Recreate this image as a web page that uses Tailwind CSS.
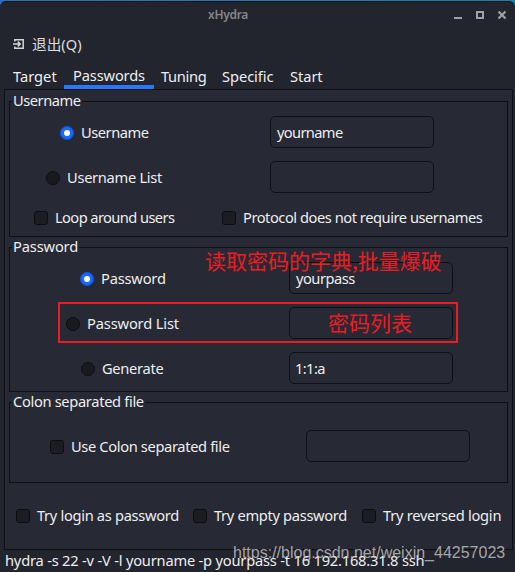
<!DOCTYPE html>
<html lang="zh">
<head>
<meta charset="utf-8">
<title>xHydra</title>
<script src="https://cdn.jsdelivr.net/npm/@tailwindcss/browser@4"></script>
</head>
<body class="w-[515px] h-[572px] overflow-hidden bg-[#0d1015] font-['Noto_Sans','Noto_Sans_CJK_SC',sans-serif] text-[14.67px] leading-[20px] text-[#eeeef0] whitespace-nowrap">
<div class="relative flex h-[572px] w-[515px] flex-col overflow-hidden bg-gradient-to-r from-[#2c70ba] to-[#1d7fa6] pt-px">
 <div class="flex h-[571px] flex-col rounded-t-[6px] border-t border-[#0e1116] bg-[#23252e]">
  <header class="relative flex h-[28px] items-center pl-[208px] text-[12px] font-semibold tracking-[-0.3px] text-[#85868b]">
   <h1 class="pb-[2px]">xHydra</h1>
   <svg class="absolute left-[453px] top-[8px]" width="56" height="12" fill="none" stroke="#a0a1a5" stroke-width="2"><path d="M1 8h8M24 2h6v6h-6z"/><path stroke-width="2.200" d="M45.500 1.500l7 7M52.500 1.500l-7 7"/></svg>
  </header>
  <nav class="flex h-[30px] items-center gap-[7px] pl-[13px]">
   <svg class="-mt-[2px]" width="12" height="12" viewBox="0 0 12 12" fill="none" stroke="#d6d6d8" stroke-width="1.500"><path d="M1.800 3.500V1.700h8.400v8.600H1.800V8.500M0 6h7M4.800 3.600L7.200 6 4.800 8.400"/></svg>
   <span class="pb-[2px] text-[#dcdcdf]">退出(Q)</span>
  </nav>
  <div class="flex h-[29px] items-center pl-[4px]">
   <span class="w-[60px] pl-[9px] pt-[2px]">Target</span>
   <span class="h-[29px] w-[90px] border-b-4 border-[#2777ff] pl-[9px] pt-[5px] tracking-[-0.15px]">Passwords</span>
   <span class="w-[61px] pl-[7px] pt-[2px] tracking-[-0.33px]">Tuning</span>
   <span class="w-[68px] pl-[7px] pt-[2px] tracking-[-0.06px]">Specific</span>
   <span class="pl-[7px] pt-[2px] tracking-[-0.06px]">Start</span>
  </div>
  <main class="ml-[4px] h-[461px] w-[509px] shrink-0 border border-[#0d0f14] bg-[#272a34] px-[4px] pt-[11px]">
   <section class="h-[136px] w-[499px] border border-[#0d0f14]">
    <h2 class="-mt-[9px] ml-[2px] h-[17px] leading-[14px] w-[70px] bg-[#272a34] pl-px tracking-[-0.46px]">Username</h2>
    <div class="mt-[6px] flex h-[32px] items-center pl-[50px]">
     <i class="mt-px mr-[7px] size-[14px] rounded-full border border-[#0d55e6] bg-[#1769ff] p-[3px]"><b class="block size-[6px] rounded-full bg-white"></b></i><span class="w-[189px] pb-px tracking-[-0.46px]">Username</span>
     <span class="flex h-[32px] w-[164px] items-center rounded-[5px] border border-[#0d0f14] pb-px pl-[6px] tracking-[-0.65px]">yourname</span>
    </div>
    <div class="mt-[13px] flex h-[32px] items-center pl-[36px]">
     <i class="mt-px mr-[7px] size-[14px] rounded-full border border-[#0c0d11] bg-[#181a20]"></i><span class="w-[203px] pb-px tracking-[-0.3px]">Username List</span>
     <span class="h-[32px] w-[164px] rounded-[5px] border border-[#0d0f14]"></span>
    </div>
    <div class="mt-[15px] flex h-[20px] items-center pl-[24px]">
     <i class="mr-[7px] size-[14px] rounded-[3px] border border-[#0c0d11] bg-[#1b1d23]"></i><span class="w-[167px] pb-[2px] tracking-[-0.59px]">Loop around users</span>
     <i class="mr-[7px] size-[14px] rounded-[3px] border border-[#0c0d11] bg-[#1b1d23]"></i><span class="pb-[2px] tracking-[-0.46px]">Protocol does not require usernames</span>
    </div>
   </section>
   <section class="mt-[10px] h-[145px] w-[499px] border border-[#0d0f14]">
    <h2 class="-mt-[9px] ml-[2px] h-[17px] leading-[14px] w-[67px] bg-[#272a34] pl-px tracking-[-0.15px]">Password</h2>
    <div class="mt-[6px] flex h-[32px] items-center pl-[70px]">
     <i class="mt-px mr-[7px] size-[14px] rounded-full border border-[#0d55e6] bg-[#1769ff] p-[3px]"><b class="block size-[6px] rounded-full bg-white"></b></i><span class="w-[188px] pb-px tracking-[-0.2px]">Password</span>
     <span class="flex h-[32px] w-[164px] items-center rounded-[5px] border border-[#0d0f14] pb-px pl-[6px] tracking-[-0.5px]">yourpass</span>
    </div>
    <div class="mt-[13px] flex h-[32px] items-center pl-[56px]">
     <i class="mt-px mr-[7px] size-[14px] rounded-full border border-[#0c0d11] bg-[#181a20]"></i><span class="w-[202px] pb-px tracking-[-0.15px]">Password List</span>
     <span class="h-[32px] w-[164px] rounded-[5px] border border-[#0d0f14]"></span>
    </div>
    <div class="mt-[13px] flex h-[32px] items-center pl-[71px]">
     <i class="mt-px mr-[7px] size-[14px] rounded-full border border-[#0c0d11] bg-[#181a20]"></i><span class="w-[187px] pb-px tracking-[-0.3px]">Generate</span>
     <span class="flex h-[32px] w-[164px] items-center rounded-[5px] border border-[#0d0f14] pb-px pl-[5px] tracking-[-0.6px]">1:1:a</span>
    </div>
   </section>
   <section class="mt-[10px] h-[81px] w-[499px] border border-[#0d0f14]">
    <h2 class="-mt-[9px] ml-[2px] h-[17px] leading-[14px] w-[133px] bg-[#272a34] pl-px tracking-[-0.33px]">Colon separated file</h2>
    <div class="mt-[19px] flex h-[32px] items-center pl-[40px]">
     <i class="mt-px mr-[7px] size-[14px] rounded-[3px] border border-[#0c0d11] bg-[#1b1d23]"></i><span class="w-[235px] pb-px tracking-[-0.36px]">Use Colon separated file</span>
     <span class="h-[32px] w-[164px] rounded-[5px] border border-[#0d0f14]"></span>
    </div>
   </section>
   <div class="mt-[23px] flex h-[20px] items-center pl-[7px]">
    <i class="mr-[7px] size-[14px] rounded-[3px] border border-[#0c0d11] bg-[#1b1d23]"></i><span class="w-[156px] pb-[2px] tracking-[-0.32px]">Try login as password</span>
    <i class="mr-[7px] size-[14px] rounded-[3px] border border-[#0c0d11] bg-[#1b1d23]"></i><span class="w-[148px] pb-[2px] tracking-[-0.32px]">Try empty password</span>
    <i class="mr-[7px] size-[14px] rounded-[3px] border border-[#0c0d11] bg-[#1b1d23]"></i><span class="pb-[2px] tracking-[-0.26px]">Try reversed login</span>
   </div>
  </main>
  <footer class="h-[22px] pl-[5px] tracking-[-0.2px]">hydra -s 22 -v -V -l yourname -p yourpass -t 16 192.168.31.8 ssh</footer>
 </div>
 <div class="absolute left-[205px] top-[245px] font-['Noto_Sans_CJK_SC',sans-serif] text-[21px] leading-[30px] text-[#ed1c24]">读取密码的字典,批量爆破</div>
 <div class="absolute left-[58px] top-[302px] h-[41px] w-[400px] border-2 border-[#ed1c24]"></div>
 <div class="absolute left-[328px] top-[307px] font-['Noto_Sans_CJK_SC',sans-serif] text-[21px] leading-[30px] text-[#ed1c24]">密码列表</div>
 <div class="absolute left-[233px] top-[543px] font-['Liberation_Sans',sans-serif] text-[16px] leading-[20px] text-[#c8c8cc]/80">https://blog.csdn.net/weixin_44257023</div>
</div>
</body>
</html>
